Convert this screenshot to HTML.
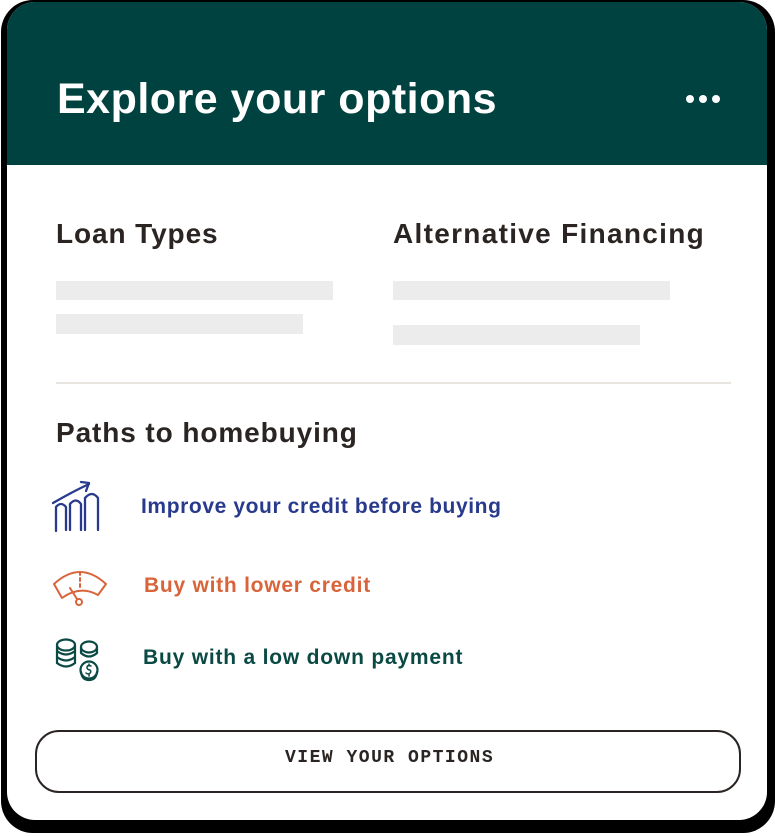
<!DOCTYPE html>
<html><head><meta charset="utf-8"><style>
*{margin:0;padding:0;box-sizing:border-box}
html,body{width:775px;height:836px;background:#fff;overflow:hidden;font-family:"Liberation Sans",sans-serif}
.shadow{position:absolute;left:1px;top:0;width:774px;height:833px;background:#000;border-radius:32px}
.card{position:absolute;left:7px;top:2px;width:760px;height:818px;background:#fff;border-radius:28px;overflow:hidden}
.hdr{position:absolute;left:0;top:0;width:760px;height:163px;background:#004240}
.t{position:absolute;white-space:nowrap}
.bar{position:absolute;background:#ececec}
</style></head><body>
<div class="shadow"></div>
<div class="card">
<div class="hdr"></div>
</div>
<div class="t" style="left:57px;top:75px;font-size:43px;font-weight:bold;color:#fff;letter-spacing:0.5px">Explore your options</div>
<div style="position:absolute;left:686px;top:95px;width:8px;height:8px;border-radius:50%;background:#fff"></div>
<div style="position:absolute;left:699px;top:95px;width:8px;height:8px;border-radius:50%;background:#fff"></div>
<div style="position:absolute;left:712px;top:95px;width:8px;height:8px;border-radius:50%;background:#fff"></div>

<div class="t" style="left:56px;top:218px;font-size:28px;font-weight:bold;color:#2a2522;letter-spacing:0.9px">Loan Types</div>
<div class="t" style="left:393px;top:218px;font-size:28px;font-weight:bold;color:#2a2522;letter-spacing:1.3px">Alternative Financing</div>
<div class="bar" style="left:56px;top:281px;width:277px;height:19px"></div>
<div class="bar" style="left:56px;top:314px;width:247px;height:20px"></div>
<div class="bar" style="left:393px;top:281px;width:277px;height:19px"></div>
<div class="bar" style="left:393px;top:325px;width:247px;height:20px"></div>
<div style="position:absolute;left:56px;top:382px;width:675px;height:2px;background:#e8e4e0"></div>
<div class="t" style="left:56px;top:417px;font-size:28px;font-weight:bold;color:#2a2522;letter-spacing:0.9px">Paths to homebuying</div>

<svg style="position:absolute;left:0;top:0" width="775" height="836" fill="none" stroke-linecap="round" stroke-linejoin="round">
<g stroke="#283a8c" stroke-width="2.3">
<path d="M53 503 Q72 492 89 484"/><path d="M81 482 L89 483 L86 491"/>
<path d="M56 531 V507 Q61 501 66 507 V530"/>
<path d="M70 530 V504 Q76 497 81 504 V530"/>
<path d="M85 530 V498 Q92 490 98 498 V530"/>
</g>
<g stroke="#d9643a" stroke-width="2">
<path d="M54 584 Q80 560 106 584 L98 595 Q80 585 62 598 Z"/>
<path d="M80 572 V590" stroke-dasharray="3 3"/>
<path d="M70 588 L77 599"/><circle cx="79" cy="602" r="3"/>
</g>
<g stroke="#0b4a44" stroke-width="2.2">
<ellipse cx="66" cy="645" rx="9" ry="5.5"/>
<path d="M57 645 V663 M75 645 V663"/>
<path d="M57 651 Q66 658 75 651 M57 657 Q66 664 75 657 M57 663 Q66 670 75 663"/>
<ellipse cx="89" cy="647" rx="8" ry="5.5"/>
<path d="M81 647 V653 Q89 660 97 653 V647"/>
<circle cx="89" cy="670" r="8.5"/>
<path d="M81 672 Q82 680 89 680 Q96 680 97 672"/>
<path d="M91 666 Q87 664 87 668 Q88 670 90 670 Q92 672 89 674 Q87 674 86 673 M89 664 V666 M89 674 V676" stroke-width="1.5"/>
</g>
</svg>

<div class="t" style="left:141px;top:495px;font-size:21px;font-weight:bold;color:#283a8c;letter-spacing:0.6px">Improve your credit before buying</div>
<div class="t" style="left:144px;top:574px;font-size:21px;font-weight:bold;color:#d9643a;letter-spacing:0.75px">Buy with lower credit</div>
<div class="t" style="left:143px;top:646px;font-size:21px;font-weight:bold;color:#0b4a44;letter-spacing:0.8px">Buy with a low down payment</div>

<div style="position:absolute;left:35px;top:730px;width:706px;height:63px;border:2px solid #2a2522;border-radius:24px"></div>
<div class="t" style="left:285px;top:748px;font-family:'Liberation Mono',monospace;font-size:18px;font-weight:bold;color:#2a2522;letter-spacing:1.5px">VIEW YOUR OPTIONS</div>
</body></html>
